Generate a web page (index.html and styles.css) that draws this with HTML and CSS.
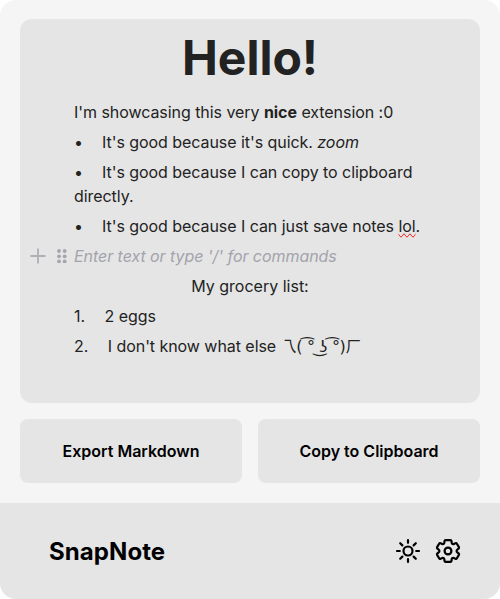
FILE: index.html
```html
<!DOCTYPE html>
<html lang="en">
<head>
<meta charset="utf-8">
<title>SnapNote</title>
<link rel="stylesheet" href="styles.css">
</head>
<body>
<div class="popup">
  <main class="content">
    <section class="editor">
      <h1 class="heading">Hello!</h1>
      <p class="block">I'm showcasing this very <strong>nice</strong> extension :0</p>
      <p class="block"><span class="bullet">•</span>It's good because it's quick. <em>zoom</em></p>
      <p class="block"><span class="bullet">•</span>It's good because I can copy to clipboard directly.</p>
      <p class="block"><span class="bullet">•</span>It's good because I can just save notes <span class="misspelt">lol</span>.</p>
      <div class="block active">
        <div class="side-menu">
          <svg class="plus" width="16" height="16" viewBox="0 0 16 16"><path d="M8 .5v15M.5 8h15"/></svg>
          <svg class="grip" width="10" height="14" viewBox="0 0 10 14"><circle cx="2" cy="2" r="1.9"/><circle cx="7.700" cy="2" r="1.9"/><circle cx="2" cy="7.300" r="1.9"/><circle cx="7.700" cy="7.300" r="1.9"/><circle cx="2" cy="12.500" r="1.9"/><circle cx="7.700" cy="12.500" r="1.9"/></svg>
        </div>
        <em>Enter text or type '/' for commands</em>
      </div>
      <p class="block centered">My grocery list:</p>
      <p class="block"><span class="number">1.</span>2 eggs</p>
      <p class="block"><span class="number">2.</span>I don't know what else <span class="kaomoji"><span class="arm">乁</span>( ͡° ͜ʖ ͡°)<span class="arm">ㄏ</span></span></p>
    </section>
    <div class="actions">
      <button class="action">Export Markdown</button>
      <button class="action">Copy to Clipboard</button>
    </div>
  </main>
  <footer class="footer">
    <div class="brand">SnapNote</div>
    <div class="tools">
      <svg width="24" height="24" viewBox="0 0 24 24"><circle cx="12" cy="12" r="4.500"/><path d="M12 1v2.800M12 20.200V23M1 12h2.800M20.200 12H23M4.200 4.200l2.200 2.200M17.600 17.600l2.200 2.200M4.200 19.800l2.200-2.200M17.600 6.400l2.200-2.200"/></svg>
      <svg width="24" height="24" viewBox="0 0 24 24"><circle cx="12" cy="12" r="3.400"/><path d="M9.600 1.100h4.800q1 0 1.100 1l.2 1.700q.1.900.9 1.200.6.200 1.200-.1l1.600-.7q1-.4 1.500.5l2 3.400q.5.900-.3 1.500l-1.300 1q-.7.500-.7 1.400t.7 1.400l1.300 1q.8.600.3 1.500l-2 3.400q-.5.900-1.500.5l-1.600-.7q-.6-.3-1.200-.1-.8.300-.9 1.200l-.2 1.700q-.1 1-1.100 1H9.600q-1 0-1.100-1l-.2-1.700q-.1-.9-.9-1.200-.6-.2-1.200.1l-1.600.7q-1 .4-1.500-.5l-2-3.400q-.5-.9.3-1.500l1.300-1q.7-.5.7-1.400t-.7-1.400l-1.300-1q-.8-.6-.3-1.500l2-3.400q.5-.9 1.500-.5l1.600.7q.6.300 1.200.1.800-.3.900-1.200l.2-1.700q.1-1 1.100-1z"/></svg>
    </div>
  </footer>
</div>
</body>
</html>
```
FILE: styles.css
```css
* { box-sizing: border-box; }
body { margin: 0; background: #fff; font-family: Inter, "Noto Sans CJK SC", sans-serif; font-size: 16px; line-height: 24px; }
.popup { width: 500px; height: 599px; background: #f5f5f5; border-radius: 16px; overflow: hidden; display: flex; flex-direction: column; }
.content { flex: 1; padding: 19px 20px 0; }
.editor { height: 384px; padding: 3px 54px; border-radius: 12px; background: #e5e5e5; color: #222; }
.heading { margin: 0; padding: 0 0 3px; font-size: 48px; line-height: 72px; font-weight: 700; text-align: center; }
.block { margin: 0; padding: 3px 0; letter-spacing: -0.055px; }
.bullet { display: inline-block; width: 28px; }
.number { margin-right: 19.5px; }
.misspelt { text-decoration-line: spelling-error; }
.active { position: relative; color: #a3a3ab; }
.side-menu { position: absolute; left: -44px; top: 0; height: 30px; display: flex; align-items: center; gap: 11px; }
.plus { stroke: #aeaeb5; stroke-width: 1.8; }
.grip { fill: #a5a5ac; }
.centered { text-align: center; letter-spacing: 0; }
.kaomoji { font-family: "DejaVu Sans", sans-serif; line-height: 1; letter-spacing: -0.33px; }
.arm { font-family: "Noto Sans CJK SC", sans-serif; }
.actions { display: grid; grid-template-columns: 1fr 1fr; gap: 16px; margin-top: 16px; }
.action { height: 64px; border: 0; border-radius: 8px; background: #e5e5e5; color: #000; font: 600 16px/24px Inter, sans-serif; }
.footer { height: 96px; padding: 0 40px 0 49px; background: #e5e5e5; display: flex; align-items: center; justify-content: space-between; }
.brand { padding-top: 2px; font-size: 24px; line-height: 32px; font-weight: 700; letter-spacing: 0.08px; color: #000; }
.tools { display: flex; gap: 16px; }
.tools svg { fill: none; stroke: #000; stroke-width: 2.2; stroke-linecap: round; stroke-linejoin: round; overflow: visible; }
```
